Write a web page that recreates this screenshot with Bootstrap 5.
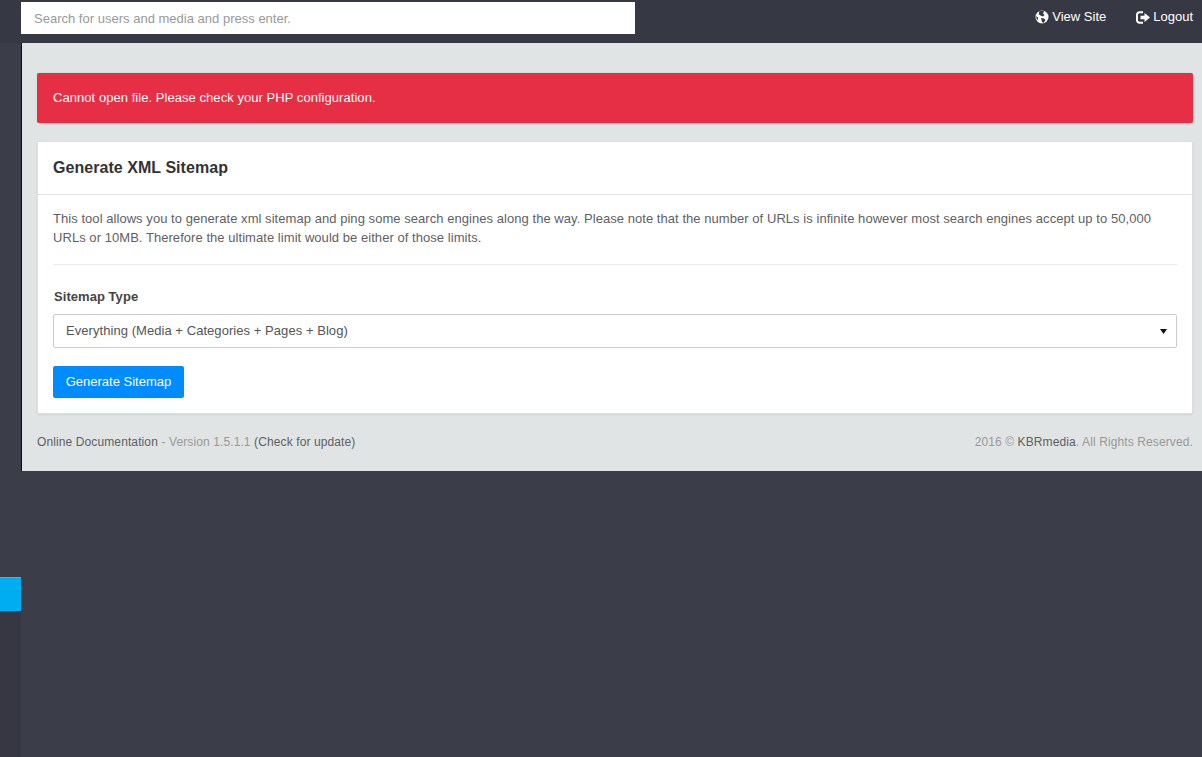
<!DOCTYPE html>
<html lang="en">
<head>
<meta charset="utf-8">
<title>Generate XML Sitemap</title>
<link href="https://cdn.jsdelivr.net/npm/bootstrap@5.3.0/dist/css/bootstrap.min.css" rel="stylesheet">
<style>
html,body{height:757px;overflow:hidden}
body{background:#3b3d49;font-family:"Liberation Sans",Arial,sans-serif;font-size:13px;letter-spacing:.05px;color:#5c5c5c}
.topbar{height:43px;background:#363844}
.searchwrap{width:614px;height:32px;margin:2px 0 0 21px;background:#fff}
.searchwrap .form-control{height:32px;border:0;border-radius:0;background:transparent;padding:0 13px;font-size:13px;letter-spacing:.01px;box-shadow:none;color:#555}
.searchwrap .form-control::placeholder{color:#999;opacity:1}
.toplinks{gap:30px;padding:0 9px 0 0;height:34px;font-size:13px;letter-spacing:0}
.toplinks a{color:#fff;text-decoration:none;display:flex;align-items:center;gap:2px}
.toplinks a:first-child{gap:3px}
.sidestrip{width:21px;flex:none;background:#3b3d49}
.sideitem{height:34px;margin-top:534px;background:#00adf0;border-top:1px solid #2fbcf2}
.sidetail{height:147px;background:#363743}
.mainpane{width:1181px;height:428px;background:#e0e4e4;border-left:1px solid #0d0d10;padding:30px 9px 0 15px}
.alertbox{height:50px;background:#e62e44;color:#fff;border:0;border-radius:2px;margin:0 0 18px;padding:0 16px;display:flex;align-items:center;box-shadow:0 0 1px rgba(0,0,0,.3)}
.panelbox{border:1px solid #dcdfdf;border-radius:2px;background:#fff;height:273px;box-shadow:0 1px 2px rgba(0,0,0,.08)}
.panelhead{height:53px;padding:0 15px;display:flex;align-items:center;background:#fff;border-bottom:1px solid #e4e4e4}
.panelhead h1{font-size:16px;font-weight:700;margin:0;color:#333;letter-spacing:.05px}
.panelbody{padding:14px 15px 0}
.panelbody p{line-height:19px;margin:0;color:#5f5f63}
.panelbody hr{margin:17px 0 24px;border-top:1px solid #ddd;opacity:.6}
.fieldlabel{font-weight:700;color:#444;margin-bottom:10px;line-height:15px;display:block;margin-left:1px}
.panelbody .form-select{height:34px;border:1px solid #ccc;border-radius:2px;font-size:13px;letter-spacing:.055px;color:#555;padding:0 12px;box-shadow:none;background-size:9px 5px;background-position:right 8px center;background-image:url("data:image/svg+xml,%3Csvg xmlns='http://www.w3.org/2000/svg' viewBox='0 0 9 5'%3E%3Cpath d='M1 0h7L4.500 5z' fill='%23111'/%3E%3C/svg%3E")}
.gobtn{margin-top:18px;width:131px;height:32px;padding:0;background:#008cff;border:0;border-radius:2px;color:#fff;font-size:13px;letter-spacing:0}
.footline{margin-top:21px;color:#999;line-height:15px;font-size:12px;letter-spacing:.11px}
.footline a{color:#5f5f63;text-decoration:none}
</style>
</head>
<body>
<header class="topbar d-flex justify-content-between align-items-start">
  <form class="searchwrap"><input class="form-control" type="text" placeholder="Search for users and media and press enter."></form>
  <nav class="toplinks d-flex align-items-center">
    <a href="#"><svg width="14" height="14" viewBox="0 0 14 14"><circle cx="7" cy="7" r="6.500" fill="#fff"/><path d="M4 1.500c1.500-.8 3.500-1 5-.3L8 3.500 9.500 5 8 6.500 5.500 5.500 4 4.500zM6 8l3 .5 1.500 1.500-2 3-1.500-1-.5-2zM1 6l2 1.500L3 10 1.700 9z" fill="#363844"/></svg>View Site</a>
    <a href="#"><svg width="15" height="13" viewBox="0 0 15 13"><path d="M7 1.200H3.500A2.500 2.500 0 0 0 1 3.700v5.600a2.500 2.500 0 0 0 2.500 2.500H7" fill="none" stroke="#fff" stroke-width="2"/><path d="M4.500 4.700H8.500V2L14 6.500 8.500 11V8.300H4.500z" fill="#fff"/></svg>Logout</a>
  </nav>
</header>
<div class="d-flex">
  <aside class="sidestrip d-flex flex-column"><div class="sideitem"></div><div class="sidetail"></div></aside>
  <main class="mainpane align-self-start">
    <div class="alert alertbox" role="alert">Cannot open file. Please check your PHP configuration.</div>
    <section class="card panelbox">
      <div class="panelhead"><h1>Generate XML Sitemap</h1></div>
      <div class="panelbody">
        <p>This tool allows you to generate xml sitemap and ping some search engines along the way. Please note that the number of URLs is infinite however most search engines accept up to 50,000 URLs or 10MB. Therefore the ultimate limit would be either of those limits.</p>
        <hr>
        <form>
          <label class="fieldlabel" for="sitemaptype">Sitemap Type</label>
          <select class="form-select" id="sitemaptype"><option>Everything (Media + Categories + Pages + Blog)</option></select>
          <button type="button" class="btn gobtn">Generate Sitemap</button>
        </form>
      </div>
    </section>
    <footer class="footline d-flex justify-content-between">
      <div><a href="#">Online Documentation</a> - Version 1.5.1.1 <a href="#">(Check for update)</a></div>
      <div>2016 © <a href="#">KBRmedia</a>. All Rights Reserved.</div>
    </footer>
  </main>
</div>
<script src="https://cdn.jsdelivr.net/npm/bootstrap@5.3.0/dist/js/bootstrap.bundle.min.js"></script>
</body>
</html>
